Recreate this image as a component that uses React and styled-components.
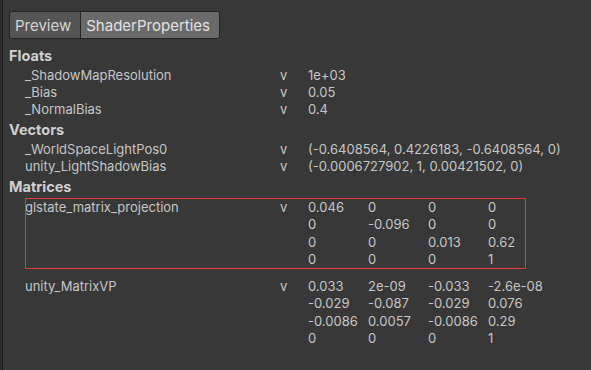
import React from 'react';
import styled, { createGlobalStyle } from 'styled-components';

const GlobalStyle = createGlobalStyle`
  html, body {
    margin: 0;
    padding: 0;
    background: #383838;
  }
  body {
    font-family: Inter, "Noto Sans", sans-serif;
    color: #c6c6c6;
  }
`;

const Frame = styled.div`
  min-height: 100vh;
  border-left: 2px solid #2d2d2d;
`;

const Panel = styled.div`
  min-height: 100vh;
  border-left: 1px solid #1b1b1b;
  padding: 11px 0 0 6px;
  box-sizing: border-box;
`;

const TabGroup = styled.div`
  display: inline-flex;
  height: 28px;
  border: 1px solid #242424;
  border-radius: 3px;
  overflow: hidden;
  box-sizing: border-box;
`;

const Tab = styled.div`
  display: flex;
  align-items: center;
  padding: 0 9px 0 5px;
  font-size: 15px;
  color: ${(p) => (p.$active ? '#e2e2e2' : '#d4d4d4')};
  background: ${(p) => (p.$active ? '#6a6a6a' : '#555555')};
  border-left: ${(p) => (p.$active ? '1px solid #242424' : 'none')};
`;

const Content = styled.div`
  padding-top: 7px;
`;

const SectionTitle = styled.div`
  height: 21px;
  line-height: 20px;
  font-size: 14.5px;
  font-weight: 700;
  color: #d0d0d0;
  margin-top: ${(p) => (p.$first ? '0' : '2px')};
`;

const Row = styled.div`
  display: grid;
  grid-template-columns: 255px 28px 1fr;
  height: 17px;
  line-height: 17px;
  font-size: 13px;
  padding-left: 16px;
`;

const MatrixRow = styled.div`
  display: grid;
  grid-template-columns: 255px 28px 1fr;
  margin-left: 16px;
  width: 501px;
  height: 71px;
  padding-top: 2px;
  box-sizing: border-box;
  font-size: 13px;
  line-height: 15px;
  outline: ${(p) => (p.$highlight ? '1px solid #e23a3a' : 'none')};
  outline-offset: -1px;
  margin-top: ${(p) => (p.$highlight ? '0' : '8px')};
`;

const MatrixGrid = styled.div`
  display: grid;
  grid-template-columns: repeat(4, 60px);
`;

const Cell = styled.span`
  white-space: nowrap;
`;

const floats = [
  ['_ShadowMapResolution', '1e+03'],
  ['_Bias', '0.05'],
  ['_NormalBias', '0.4'],
];

const vectors = [
  ['_WorldSpaceLightPos0', '(-0.6408564, 0.4226183, -0.6408564, 0)'],
  ['unity_LightShadowBias', '(-0.0006727902, 1, 0.00421502, 0)'],
];

const matrices = [
  {
    name: 'glstate_matrix_projection',
    highlight: true,
    values: [
      ['0.046', '0', '0', '0'],
      ['0', '-0.096', '0', '0'],
      ['0', '0', '0.013', '0.62'],
      ['0', '0', '0', '1'],
    ],
  },
  {
    name: 'unity_MatrixVP',
    values: [
      ['0.033', '2e-09', '-0.033', '-2.6e-08'],
      ['-0.029', '-0.087', '-0.029', '0.076'],
      ['-0.0086', '0.0057', '-0.0086', '0.29'],
      ['0', '0', '0', '1'],
    ],
  },
];

export default function App() {
  return (
    <Frame>
      <GlobalStyle />
      <Panel>
        <TabGroup>
          <Tab>Preview</Tab>
          <Tab $active>ShaderProperties</Tab>
        </TabGroup>
        <Content>
          <SectionTitle $first>Floats</SectionTitle>
          {floats.map(([name, val]) => (
            <Row key={name}>
              <span>{name}</span>
              <span>v</span>
              <span>{val}</span>
            </Row>
          ))}
          <SectionTitle>Vectors</SectionTitle>
          {vectors.map(([name, val]) => (
            <Row key={name}>
              <span>{name}</span>
              <span>v</span>
              <span>{val}</span>
            </Row>
          ))}
          <SectionTitle>Matrices</SectionTitle>
          {matrices.map((m) => (
            <MatrixRow key={m.name} $highlight={m.highlight}>
              <span>{m.name}</span>
              <span>v</span>
              <MatrixGrid>
                {m.values.flat().map((v, i) => (
                  <Cell key={i}>{v}</Cell>
                ))}
              </MatrixGrid>
            </MatrixRow>
          ))}
        </Content>
      </Panel>
    </Frame>
  );
}
